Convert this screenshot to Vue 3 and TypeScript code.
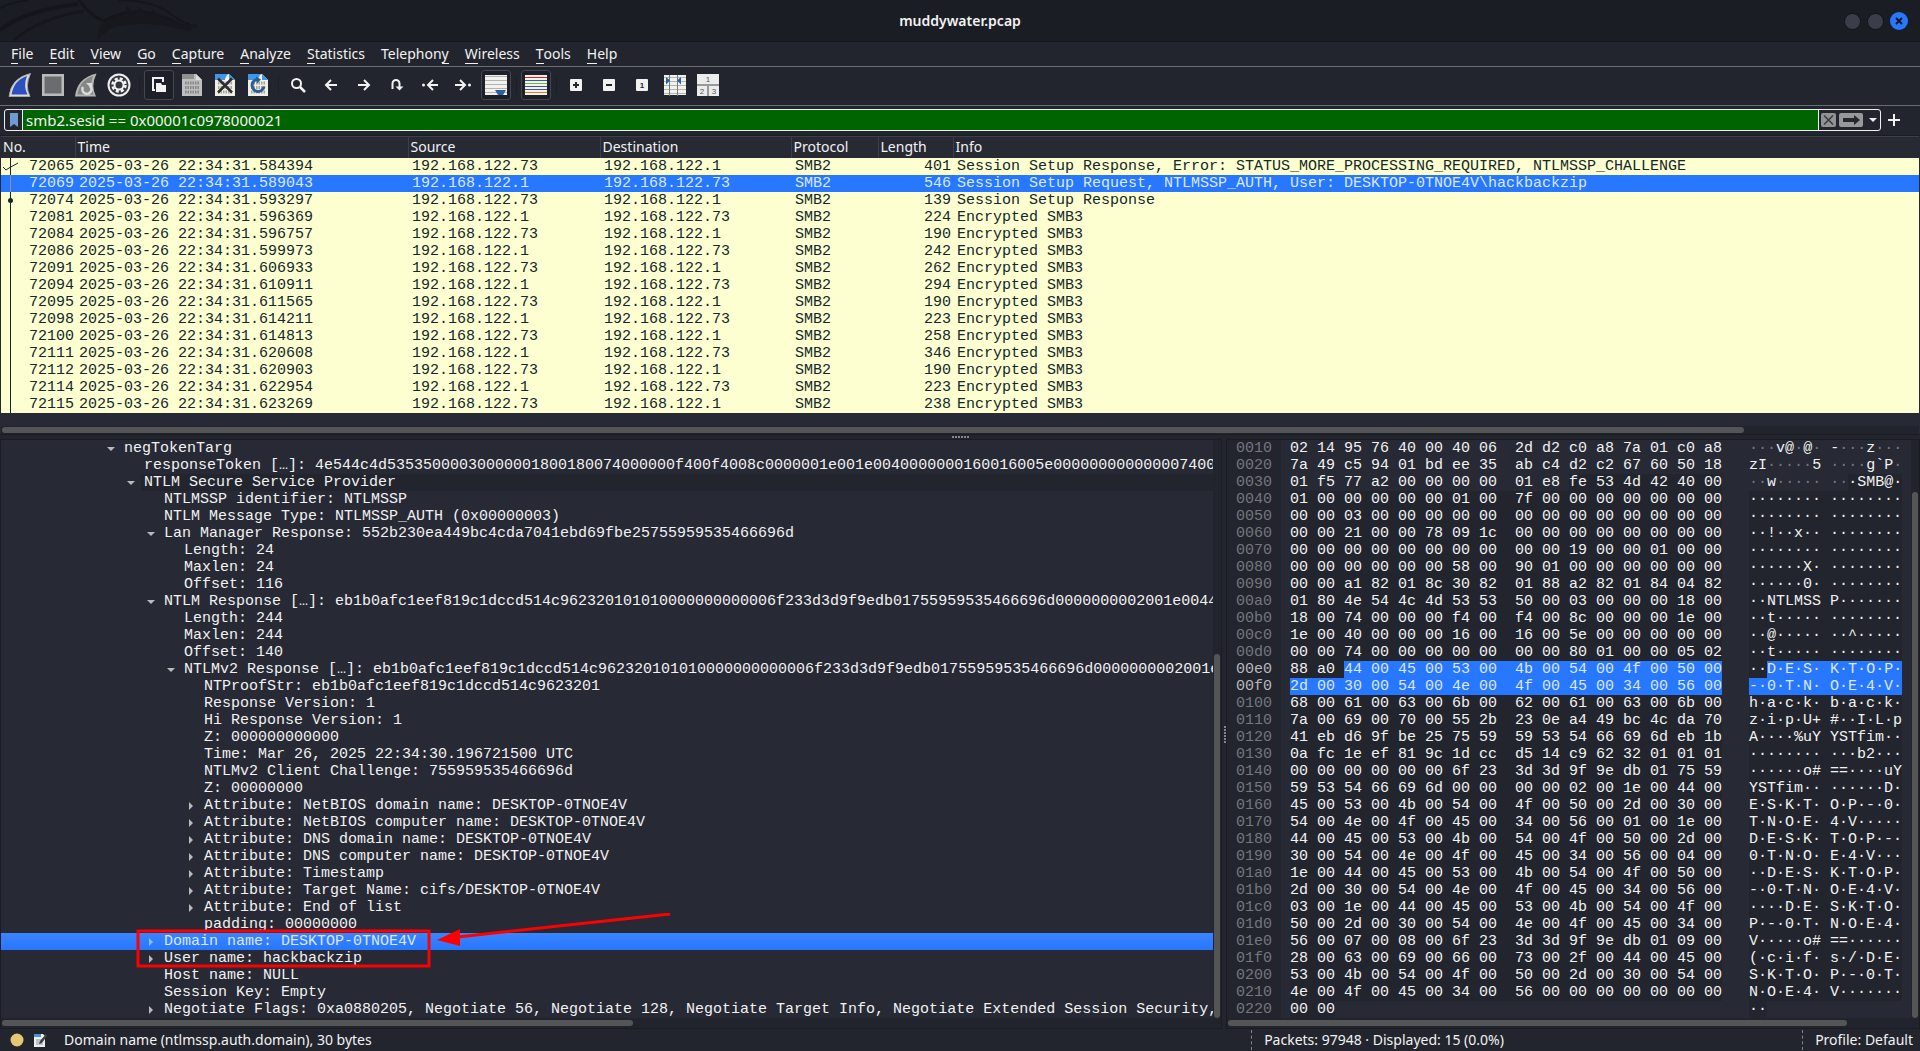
<script setup lang="ts">
interface Packet {
  no: number
  time: string
  src: string
  dst: string
  proto: string
  len: number
  info: string
}

interface TreeNode {
  depth: number
  text: string
  state?: 'open' | 'closed'
  kind?: 'header' | 'selected'
}

interface Run {
  text: string
  kind: string
}

interface MenuEntry {
  before: string
  key: string
  after: string
}

const menus: MenuEntry[] = [
  { before: '', key: 'F', after: 'ile' },
  { before: '', key: 'E', after: 'dit' },
  { before: '', key: 'V', after: 'iew' },
  { before: '', key: 'G', after: 'o' },
  { before: '', key: 'C', after: 'apture' },
  { before: '', key: 'A', after: 'nalyze' },
  { before: '', key: 'S', after: 'tatistics' },
  { before: 'Telephon', key: 'y', after: '' },
  { before: '', key: 'W', after: 'ireless' },
  { before: '', key: 'T', after: 'ools' },
  { before: '', key: 'H', after: 'elp' },
]

const client = '192.168.122.1'
const server = '192.168.122.73'

function packet(no: number, sec: string, fromServer: boolean, len: number, info = 'Encrypted SMB3'): Packet {
  return {
    no,
    time: '2025-03-26 22:34:31.' + sec,
    src: fromServer ? server : client,
    dst: fromServer ? client : server,
    proto: 'SMB2',
    len,
    info,
  }
}

const packets: Packet[] = [
  packet(72065, '584394', true, 401, 'Session Setup Response, Error: STATUS_MORE_PROCESSING_REQUIRED, NTLMSSP_CHALLENGE'),
  packet(72069, '589043', false, 546, 'Session Setup Request, NTLMSSP_AUTH, User: DESKTOP-0TNOE4V\\hackbackzip'),
  packet(72074, '593297', true, 139, 'Session Setup Response'),
  packet(72081, '596369', false, 224),
  packet(72084, '596757', true, 190),
  packet(72086, '599973', false, 242),
  packet(72091, '606933', true, 262),
  packet(72094, '610911', false, 294),
  packet(72095, '611565', true, 190),
  packet(72098, '614211', false, 223),
  packet(72100, '614813', true, 258),
  packet(72111, '620608', false, 346),
  packet(72112, '620903', true, 190),
  packet(72114, '622954', false, 223),
  packet(72115, '623269', true, 238),
]
const selectedNo = 72069

const ntResponse = 'eb1b0afc1eef819c1dccd514c962320101010000000000006f233d3d9f9edb01755959535466696d0000000002001e004400'

const tree: TreeNode[] = [
  { depth: 0, text: 'negTokenTarg', state: 'open' },
  { depth: 1, text: 'responseToken […]: 4e544c4d53535000030000001800180074000000f400f4008c0000001e001e0040000000160016005e00000000000000740000' },
  { depth: 1, text: 'NTLM Secure Service Provider', state: 'open', kind: 'header' },
  { depth: 2, text: 'NTLMSSP identifier: NTLMSSP' },
  { depth: 2, text: 'NTLM Message Type: NTLMSSP_AUTH (0x00000003)' },
  { depth: 2, text: 'Lan Manager Response: 552b230ea449bc4cda7041ebd69fbe25755959535466696d', state: 'open' },
  { depth: 3, text: 'Length: 24' },
  { depth: 3, text: 'Maxlen: 24' },
  { depth: 3, text: 'Offset: 116' },
  { depth: 2, text: 'NTLM Response […]: ' + ntResponse, state: 'open' },
  { depth: 3, text: 'Length: 244' },
  { depth: 3, text: 'Maxlen: 244' },
  { depth: 3, text: 'Offset: 140' },
  { depth: 3, text: 'NTLMv2 Response […]: ' + ntResponse, state: 'open' },
  { depth: 4, text: 'NTProofStr: eb1b0afc1eef819c1dccd514c9623201' },
  { depth: 4, text: 'Response Version: 1' },
  { depth: 4, text: 'Hi Response Version: 1' },
  { depth: 4, text: 'Z: 000000000000' },
  { depth: 4, text: 'Time: Mar 26, 2025 22:34:30.196721500 UTC' },
  { depth: 4, text: 'NTLMv2 Client Challenge: 755959535466696d' },
  { depth: 4, text: 'Z: 00000000' },
  { depth: 4, text: 'Attribute: NetBIOS domain name: DESKTOP-0TNOE4V', state: 'closed' },
  { depth: 4, text: 'Attribute: NetBIOS computer name: DESKTOP-0TNOE4V', state: 'closed' },
  { depth: 4, text: 'Attribute: DNS domain name: DESKTOP-0TNOE4V', state: 'closed' },
  { depth: 4, text: 'Attribute: DNS computer name: DESKTOP-0TNOE4V', state: 'closed' },
  { depth: 4, text: 'Attribute: Timestamp', state: 'closed' },
  { depth: 4, text: 'Attribute: Target Name: cifs/DESKTOP-0TNOE4V', state: 'closed' },
  { depth: 4, text: 'Attribute: End of list', state: 'closed' },
  { depth: 4, text: 'padding: 00000000' },
  { depth: 2, text: 'Domain name: DESKTOP-0TNOE4V', state: 'closed', kind: 'selected' },
  { depth: 2, text: 'User name: hackbackzip', state: 'closed' },
  { depth: 2, text: 'Host name: NULL' },
  { depth: 2, text: 'Session Key: Empty' },
  { depth: 2, text: 'Negotiate Flags: 0xa0880205, Negotiate 56, Negotiate 128, Negotiate Target Info, Negotiate Extended Session Security,', state: 'closed' },
]

const firstOffset = 0x10
const dump: string[] = [
  '02 14 95 76 40 00 40 06 2d d2 c0 a8 7a 01 c0 a8',
  '7a 49 c5 94 01 bd ee 35 ab c4 d2 c2 67 60 50 18',
  '01 f5 77 a2 00 00 00 00 01 e8 fe 53 4d 42 40 00',
  '01 00 00 00 00 00 01 00 7f 00 00 00 00 00 00 00',
  '00 00 03 00 00 00 00 00 00 00 00 00 00 00 00 00',
  '00 00 21 00 00 78 09 1c 00 00 00 00 00 00 00 00',
  '00 00 00 00 00 00 00 00 00 00 19 00 00 01 00 00',
  '00 00 00 00 00 00 58 00 90 01 00 00 00 00 00 00',
  '00 00 a1 82 01 8c 30 82 01 88 a2 82 01 84 04 82',
  '01 80 4e 54 4c 4d 53 53 50 00 03 00 00 00 18 00',
  '18 00 74 00 00 00 f4 00 f4 00 8c 00 00 00 1e 00',
  '1e 00 40 00 00 00 16 00 16 00 5e 00 00 00 00 00',
  '00 00 74 00 00 00 00 00 00 00 80 01 00 00 05 02',
  '88 a0 44 00 45 00 53 00 4b 00 54 00 4f 00 50 00',
  '2d 00 30 00 54 00 4e 00 4f 00 45 00 34 00 56 00',
  '68 00 61 00 63 00 6b 00 62 00 61 00 63 00 6b 00',
  '7a 00 69 00 70 00 55 2b 23 0e a4 49 bc 4c da 70',
  '41 eb d6 9f be 25 75 59 59 53 54 66 69 6d eb 1b',
  '0a fc 1e ef 81 9c 1d cc d5 14 c9 62 32 01 01 01',
  '00 00 00 00 00 00 6f 23 3d 3d 9f 9e db 01 75 59',
  '59 53 54 66 69 6d 00 00 00 00 02 00 1e 00 44 00',
  '45 00 53 00 4b 00 54 00 4f 00 50 00 2d 00 30 00',
  '54 00 4e 00 4f 00 45 00 34 00 56 00 01 00 1e 00',
  '44 00 45 00 53 00 4b 00 54 00 4f 00 50 00 2d 00',
  '30 00 54 00 4e 00 4f 00 45 00 34 00 56 00 04 00',
  '1e 00 44 00 45 00 53 00 4b 00 54 00 4f 00 50 00',
  '2d 00 30 00 54 00 4e 00 4f 00 45 00 34 00 56 00',
  '03 00 1e 00 44 00 45 00 53 00 4b 00 54 00 4f 00',
  '50 00 2d 00 30 00 54 00 4e 00 4f 00 45 00 34 00',
  '56 00 07 00 08 00 6f 23 3d 3d 9f 9e db 01 09 00',
  '28 00 63 00 69 00 66 00 73 00 2f 00 44 00 45 00',
  '53 00 4b 00 54 00 4f 00 50 00 2d 00 30 00 54 00',
  '4e 00 4f 00 45 00 34 00 56 00 00 00 00 00 00 00',
  '00 00',
]

// Byte ranges of the SMB2 layer and of the chosen field.
const layerStart = 0x3a
const fieldStart = 0xe2
const fieldEnd = 0x100

function kindOf(pos: number): string {
  if (pos >= fieldStart && pos < fieldEnd) return 'picked'
  return pos >= layerStart ? 'layer' : 'plain'
}

function push(runs: Run[], text: string, kind: string): void {
  const last = runs[runs.length - 1]
  if (last && last.kind === kind) last.text += text
  else runs.push({ text, kind })
}

// A separator always belongs to the run of the byte before it.
function append(runs: Run[], sep: string, text: string, kind: string): void {
  const last = runs[runs.length - 1]
  if (last) last.text += sep
  push(runs, text, kind)
}

const hexRows = dump.map((line, row) => {
  const base = firstOffset + row * 16
  const hex: Run[] = []
  const ascii: Run[] = []
  line.split(' ').forEach((byte, i) => {
    const kind = kindOf(base + i)
    const code = parseInt(byte, 16)
    const printable = code >= 0x20 && code < 0x7f
    append(hex, i === 8 ? '  ' : ' ', byte, kind)
    append(ascii, i === 8 ? ' ' : '', printable ? String.fromCharCode(code) : '·', kind === 'plain' && !printable ? 'faint' : kind)
  })
  return {
    offset: base.toString(16).padStart(4, '0'),
    active: base + 16 > fieldStart && base < fieldEnd,
    hex,
    ascii,
  }
})
</script>

<template>
  <div class="window">
    <header class="titlebar">
      <svg class="dragon" width="200" height="42" viewBox="0 0 200 42" aria-hidden="true">
        <g fill="none" stroke="#14161b">
          <path d="M0 8Q12 2 28 0" stroke-width="2" />
          <path d="M0 30Q26 10 78 4" stroke-width="4" />
          <path d="M14 40Q40 18 84 11" stroke-width="3" opacity=".7" />
          <path d="M79 0Q90 16 104 21Q128 8 154 14L172 20L182 26L197 26" stroke-width="3" />
          <path d="M118 0Q150 0 168 12Q180 22 190 24" stroke-width="2" />
        </g>
        <path d="M104 22Q126 12 150 15L172 22L196 26L190 31L160 25Q130 22 112 28Q104 33 98 40Q96 28 104 22ZM126 5l8 8h6l-2-6 10 7h5l-1-5 8 6-12 3-20-2z" fill="#16181e" />
      </svg>
      <h1 class="title">muddywater.pcap</h1>
      <div class="controls">
        <button class="dot" type="button" aria-label="Minimize"></button>
        <button class="dot" type="button" aria-label="Maximize"></button>
        <button class="close" type="button" aria-label="Close">
          <svg width="18" height="18" viewBox="0 0 18 18"><path d="M6 6l6 6M12 6l-6 6" stroke="#14181f" stroke-width="2" /></svg>
        </button>
      </div>
    </header>

    <nav class="menubar">
      <button v-for="m in menus" :key="m.before + m.key + m.after" type="button" class="menu">{{ m.before }}<span class="key">{{ m.key }}</span>{{ m.after }}</button>
    </nav>

    <div class="toolbar" role="toolbar" aria-label="Main">
      <button type="button" aria-label="Start capture">
        <svg width="24" height="24" viewBox="0 0 24 24"><path d="M1 23.500Q3 5 22.500 .5Q16.500 13 22 23.500Z" fill="#dcdcdc" stroke="#a4a4a4" /><path d="M3.500 21.500Q6 7 19 3Q15 13 19.500 21.500Z" fill="#2c50c0" /></svg>
      </button>
      <button type="button" aria-label="Stop capture">
        <svg width="24" height="24" viewBox="0 0 24 24"><path d="M1 1h22v22H1z" fill="#b9bbbb" /><path d="M3.500 3.500h17v17h-17z" fill="#6a6d70" /></svg>
      </button>
      <button type="button" aria-label="Restart capture">
        <svg width="24" height="24" viewBox="0 0 24 24"><path d="M1 23.500Q3 5 22.500 .5Q16.500 13 22 23.500Z" fill="#b4b4b4" /><path d="M3.500 21.500Q6 7 19 3Q15 13 19.500 21.500Z" fill="#858687" /><path d="M9 14a4.500 4.500 0 1 0 7-1" fill="none" stroke="#ddd" stroke-width="2.500" /><path d="M12 10h6v6z" fill="#ddd" /></svg>
      </button>
      <button type="button" aria-label="Capture options">
        <svg width="24" height="24" viewBox="0 0 24 24"><circle cx="12" cy="12" r="10.500" fill="#35373b" stroke="#eee" stroke-width="2" /><circle cx="12" cy="12" r="6.500" fill="none" stroke="#f4f4f4" stroke-width="2.500" stroke-dasharray="3 2.100" /><circle cx="12" cy="12" r="4.500" fill="none" stroke="#f4f4f4" stroke-width="2" /></svg>
      </button>
      <span class="sep"></span>
      <button type="button" class="on" aria-label="Open file">
        <svg width="24" height="24" viewBox="0 0 24 24"><path d="M8 17H6V5h10v4" fill="none" stroke="#f2f2f2" stroke-width="2" /><path d="M9 10h5l1 2h4v7H9z" fill="#f2f2f2" /></svg>
      </button>
      <button type="button" aria-label="Save file">
        <svg width="24" height="24" viewBox="0 0 24 24"><path d="M2 1h14l6 6v16H2z" fill="#bebebe" /><path d="M2 1h12v5H2z" fill="#8f9090" /><path d="M16 1v6h6z" fill="#dedede" /><path d="M5 10h14M5 14.500h14M5 19h14" stroke="#858585" stroke-width="3" stroke-dasharray="1.500 1" /></svg>
      </button>
      <button type="button" aria-label="Close file">
        <svg width="24" height="24" viewBox="0 0 24 24"><path d="M2 1h14l6 6v16H2z" fill="#f0efe2" /><path d="M2 1h14l6 6H2z" fill="#3f97e8" /><path d="M12 6l2-4 2-1v6h6v1H12z" fill="#f6f6f2" /><path d="M5 10h14M5 14.500h14M5 19h14" stroke="#a3a49c" stroke-width="3" stroke-dasharray="1.500 1" /><path d="M5 5.500l14 14M19 5.500l-14 14" stroke="#2b2d31" stroke-width="2.500" /></svg>
      </button>
      <button type="button" aria-label="Reload file">
        <svg width="24" height="24" viewBox="0 0 24 24"><path d="M2 1h14l6 6v16H2z" fill="#f0efe2" /><path d="M2 1h14l6 6H2z" fill="#3f97e8" /><path d="M12 6l2-4 2-1v6h6v1H12z" fill="#f6f6f2" /><path d="M5 10h14M5 14.500h14M5 19h14" stroke="#a3a49c" stroke-width="3" stroke-dasharray="1.500 1" /><path d="M11 6.500a6 6 0 1 0 7 7" fill="none" stroke="#2a5d9d" stroke-width="3" /><path d="M10 3.500l5 3-4 4z" fill="#2a5d9d" /></svg>
      </button>
      <span class="sep"></span>
      <button type="button" aria-label="Find packet">
        <svg width="24" height="24" viewBox="0 0 24 24"><circle cx="10.500" cy="10.500" r="4.500" fill="none" stroke="#f2f2f2" stroke-width="2" /><path d="M14 14l5 5" stroke="#f2f2f2" stroke-width="2.500" /></svg>
      </button>
      <button type="button" aria-label="Previous packet">
        <svg width="24" height="24" viewBox="0 0 24 24" fill="none" stroke="#f2f2f2" stroke-width="2"><path d="M18 12H7M12 7l-5 5 5 5" /></svg>
      </button>
      <button type="button" aria-label="Next packet">
        <svg width="24" height="24" viewBox="0 0 24 24" fill="none" stroke="#f2f2f2" stroke-width="2"><path d="M6 12h11M12 7l5 5-5 5" /></svg>
      </button>
      <button type="button" aria-label="Go to packet">
        <svg width="24" height="24" viewBox="0 0 24 24"><path d="M7.500 16v-5.500a3.500 3.500 0 0 1 7 0V16" fill="none" stroke="#f2f2f2" stroke-width="2" /><path d="M10.500 13.500h8l-4 4z" fill="#f2f2f2" /></svg>
      </button>
      <button type="button" aria-label="First packet">
        <svg width="24" height="24" viewBox="0 0 24 24" fill="none" stroke="#f2f2f2" stroke-width="2"><path d="M20 12H10M15 7l-5 5 5 5" /><circle cx="5.500" cy="12" r="1.500" fill="#f2f2f2" stroke="none" /></svg>
      </button>
      <button type="button" aria-label="Last packet">
        <svg width="24" height="24" viewBox="0 0 24 24" fill="none" stroke="#f2f2f2" stroke-width="2"><path d="M4 12h10M9 7l5 5-5 5" /><circle cx="18.500" cy="12" r="1.500" fill="#f2f2f2" stroke="none" /></svg>
      </button>
      <button type="button" class="on" aria-label="Auto scroll">
        <svg width="24" height="24" viewBox="0 0 24 24"><path d="M1 2h22v20H1z" fill="#f1f1ee" /><path d="M1 3.500h22M1 7.500h22M1 11.500h22M1 15.500h22M1 19.500h22" stroke="#b3b3b0" /><path d="M11 17h11l-3 5h-5z" fill="#2c5fa8" /></svg>
      </button>
      <span class="sep"></span>
      <button type="button" class="on" aria-label="Colorize packets">
        <svg width="24" height="24" viewBox="0 0 24 24"><path d="M1 2h22v20H1z" fill="#f1f1ee" /><path d="M1 4.500h22" stroke="#ec1c1c" /><path d="M1 7.500h22M1 13.500h22" stroke="#2c5fa8" /><path d="M1 10.500h22" stroke="#6cc021" /><path d="M1 16.500h22" stroke="#64507c" /><path d="M1 19.500h22" stroke="#cd7f38" /></svg>
      </button>
      <span class="sep"></span>
      <button type="button" aria-label="Zoom in">
        <svg width="24" height="24" viewBox="0 0 24 24"><rect x="6" y="6" width="12" height="12" rx="1" fill="#f2f2f2" /><path d="M9 12h6M12 9v6" stroke="#23252e" stroke-width="2" /></svg>
      </button>
      <button type="button" aria-label="Zoom out">
        <svg width="24" height="24" viewBox="0 0 24 24"><rect x="6" y="6" width="12" height="12" rx="1" fill="#f2f2f2" /><path d="M9 12h6" stroke="#23252e" stroke-width="2" /></svg>
      </button>
      <button type="button" aria-label="Normal size">
        <svg width="24" height="24" viewBox="0 0 24 24"><rect x="6" y="6" width="12" height="12" rx="1" fill="#f2f2f2" /><text x="12" y="15" class="bold-digit">1</text></svg>
      </button>
      <button type="button" aria-label="Resize columns">
        <svg width="24" height="24" viewBox="0 0 24 24"><path d="M1 2h22v20H1z" fill="#f1f1ee" /><path d="M1 4.500h22M1 8.500h22M1 12.500h22M1 16.500h22M1 20.500h22" stroke="#b3b3b0" /><path d="M6.500 2v21M14.500 2v21" stroke="#77787a" /><path d="M3 4l4 3.500-4 4zM18 4l-4 3.500 4 4z" fill="#2c5fa8" /></svg>
      </button>
      <button type="button" aria-label="Layout">
        <svg width="24" height="24" viewBox="0 0 24 24"><path d="M1 1h22v22H1z" fill="#ececec" /><path d="M1 12h22M12 12v11" stroke="#98999b" stroke-width="2" /><text x="12" y="9" class="digit">1</text><text x="6" y="21" class="digit">2</text><text x="18" y="21" class="digit">3</text></svg>
      </button>
    </div>

    <form class="filterbar" @submit.prevent>
      <div class="filterbox">
        <button type="button" class="bookmark" aria-label="Saved filters">
          <svg width="16" height="18" viewBox="0 0 16 18"><path d="M4 2h8v14l-4-3-4 3z" fill="#6f9bd2" /></svg>
        </button>
        <input class="filter" type="text" aria-label="Display filter" value="smb2.sesid == 0x00001c0978000021" spellcheck="false" />
        <div class="actions">
          <button type="button" aria-label="Clear filter">
            <svg width="15" height="14" viewBox="0 0 15 14"><rect width="15" height="14" rx="2" fill="#919293" /><path d="M3 2.500l9 9M12 2.500l-9 9" stroke="#3a3b3f" stroke-width="1.500" /></svg>
          </button>
          <button type="submit" aria-label="Apply filter">
            <svg width="24" height="14" viewBox="0 0 24 14"><rect width="24" height="14" rx="2" fill="#97989a" /><path d="M4 5h11V2l6 5-6 5V9H4z" fill="#25272e" /></svg>
          </button>
          <button type="button" class="caret" aria-label="Filter history">
            <svg width="8" height="4" viewBox="0 0 8 4"><path d="M0 0h8l-4 4z" fill="#eee" /></svg>
          </button>
        </div>
      </div>
      <button type="button" class="add" aria-label="Add filter button">
        <svg width="12" height="12" viewBox="0 0 12 12"><path d="M6 0v12M0 6h12" stroke="#f0f0f0" stroke-width="2" /></svg>
      </button>
    </form>

    <section class="list">
      <table class="packets">
        <colgroup>
          <col class="c-no" />
          <col class="c-time" />
          <col class="c-src" />
          <col class="c-dst" />
          <col class="c-proto" />
          <col class="c-len" />
          <col />
        </colgroup>
        <thead>
          <tr>
            <th>No.</th>
            <th>Time</th>
            <th>Source</th>
            <th>Destination</th>
            <th>Protocol</th>
            <th>Length</th>
            <th>Info</th>
          </tr>
        </thead>
        <tbody>
          <tr v-for="(p, i) in packets" :key="p.no" :class="{ selected: p.no === selectedNo }">
            <td class="num first">
              <div class="mark">
                <svg width="18" height="17" viewBox="0 0 18 17" aria-hidden="true">
                  <path d="M9.500 0v17" :stroke="p.no === selectedNo ? '#8b8f9e' : '#12272e'" />
                  <path v-if="i === 0" d="M2 9l3 3 3-2 9-5" fill="none" stroke="#12272e" />
                  <circle v-if="i === 2" cx="9.500" cy="8.500" r="2.500" fill="#12272e" />
                </svg>
                <span>{{ p.no }}</span>
              </div>
            </td>
            <td>{{ p.time }}</td>
            <td>{{ p.src }}</td>
            <td>{{ p.dst }}</td>
            <td>{{ p.proto }}</td>
            <td class="num">{{ p.len }}</td>
            <td>{{ p.info }}</td>
          </tr>
        </tbody>
      </table>
      <div class="hbar wide"><div class="thumb"></div></div>
    </section>

    <div class="splitter"><span class="grip"></span></div>

    <main class="panes">
      <section class="pane details">
        <div class="view">
          <ul class="tree">
            <li v-for="(n, i) in tree" :key="i" :class="['node', 'd' + n.depth, n.kind]">
              <button v-if="n.state" type="button" class="toggle" :aria-label="n.state === 'open' ? 'Collapse' : 'Expand'">
                <svg width="8" height="8" viewBox="0 0 8 8"><path :d="n.state === 'open' ? 'M0 2h8l-4 4z' : 'M2 0v8l4-4z'" fill="currentColor" /></svg>
              </button>
              <span v-else class="toggle"></span>
              <span class="label">{{ n.text }}</span>
            </li>
          </ul>
          <svg class="note" width="540" height="60" viewBox="0 0 540 60" aria-hidden="true">
            <rect x="2" y="18" width="291" height="35" fill="none" stroke="#fe0000" stroke-width="3" />
            <path d="M322 24L534 1" stroke="#fe0000" stroke-width="3" />
            <path d="M301 27L324 16V33Z" fill="#fe0000" />
          </svg>
          <div class="vbar"><div class="thumb"></div></div>
        </div>
        <div class="hbar"><div class="thumb"></div></div>
      </section>

      <div class="vsplitter"><span class="vgrip"></span></div>

      <section class="pane bytes">
        <div class="view">
          <div class="offsets">
            <div v-for="r in hexRows" :key="r.offset" :class="{ active: r.active }">{{ r.offset }}</div>
          </div>
          <div class="hex">
            <div v-for="r in hexRows" :key="r.offset"><span v-for="(s, i) in r.hex" :key="i" :class="s.kind">{{ s.text }}</span></div>
          </div>
          <div class="ascii">
            <div v-for="r in hexRows" :key="r.offset"><span v-for="(s, i) in r.ascii" :key="i" :class="s.kind">{{ s.text }}</span></div>
          </div>
          <div class="vbar"><div class="thumb"></div></div>
        </div>
        <div class="hbar"><div class="thumb"></div></div>
      </section>
    </main>

    <footer class="status">
      <button type="button" aria-label="Expert information">
        <svg width="14" height="14" viewBox="0 0 14 14"><circle cx="7" cy="7" r="6.500" fill="#e5c876" /></svg>
      </button>
      <button type="button" aria-label="Capture comment">
        <svg width="14" height="14" viewBox="0 0 14 14"><path d="M1 1h9l2 2v11H1z" fill="#eef0f0" /><path d="M1 1h7v3H1z" fill="#4c93d6" /><path d="M3 7h6M3 9h6M3 11h7" stroke="#8d9499" /><path d="M13 1L7 8l-1 3 3-1 5-7z" fill="#3c4147" /></svg>
      </button>
      <span class="field">Domain name (ntlmssp.auth.domain), 30 bytes</span>
      <span class="count">Packets: 97948 · Displayed: 15 (0.0%)</span>
      <span class="profile">Profile: Default</span>
    </footer>
  </div>
</template>

<style>
body {
  margin: 0;
  background: #23252e;
}
</style>

<style scoped>
.window {
  display: flex;
  flex-direction: column;
  min-height: 100vh;
  background: #23252e;
  color: #f2f2f2;
  font: 14px/20px "Noto Sans", sans-serif;
}

button {
  display: flex;
  align-items: center;
  justify-content: center;
  padding: 0;
  border: 0;
  background: none;
  color: inherit;
  font: inherit;
}

.titlebar {
  display: grid;
  grid-template-columns: 1fr auto 1fr;
  align-items: center;
  height: 42px;
  border-bottom: 1px solid #15171c;
  background: #1b1d24;
  box-sizing: border-box;
}

.title {
  margin: 0;
  font-size: 14px;
  font-weight: 600;
}

.controls {
  display: flex;
  align-items: center;
  justify-content: flex-end;
  gap: 6px;
  padding-right: 12px;
}

.dot {
  width: 17px;
  height: 17px;
  border: 1px solid #111318;
  border-radius: 50%;
  background: #3b3d4a;
}

.close {
  width: 18px;
  height: 18px;
  border-radius: 50%;
  background: #2777ff;
}

.menubar {
  display: flex;
  gap: 16px;
  height: 24px;
  padding-left: 11px;
  border-bottom: 1px solid #6a6c72;
}

.menu {
  height: 24px;
  line-height: 18px;
}

.key {
  border-bottom: 1px solid #f2f2f2;
}

.toolbar {
  display: flex;
  align-items: center;
  gap: 3px;
  height: 36px;
  padding: 0 0 2px 5px;
  border-bottom: 1px solid #6a6c72;
}

.toolbar button {
  width: 30px;
  height: 30px;
  border-radius: 3px;
  box-sizing: border-box;
}

.toolbar .on {
  border: 1px solid #454652;
  background: #1e2029;
}

.digit,
.bold-digit {
  fill: #55575a;
  font: 8px "Liberation Sans", sans-serif;
  text-anchor: middle;
}

.bold-digit {
  fill: #23252e;
  font-weight: 700;
}

.sep {
  width: 4px;
  height: 18px;
  background: linear-gradient(#1d1f27, #1d1f27) center / 1px 100% no-repeat;
}

.filterbar {
  display: flex;
  align-items: center;
  padding: 3px 13px 4px 4px;
}

.filterbox {
  display: flex;
  flex: 1;
  height: 22px;
  border: 1px solid #f0f0f0;
  border-radius: 3px;
  box-sizing: border-box;
}

.bookmark {
  width: 17px;
}

.filter {
  flex: 1;
  min-width: 0;
  padding: 0 3px;
  border: 0;
  border-left: 1px solid #f0f0f0;
  border-right: 1px solid #f0f0f0;
  background: #006400;
  color: #f4f4f4;
  font: inherit;
  font-size: 15px;
}

.actions {
  display: flex;
  align-items: center;
  gap: 3px;
  padding-left: 2px;
}

.caret {
  width: 14px;
}

.add {
  width: 26px;
}

.list {
  padding: 0 1px;
  border-top: 1px solid #1a1c22;
  border-bottom: 1px solid #1a1c22;
  background: #272935;
}

.packets {
  width: 100%;
  table-layout: fixed;
  border-collapse: collapse;
}

.c-no {
  width: 74px;
}

.c-time {
  width: 333px;
}

.c-src {
  width: 192px;
}

.c-dst {
  width: 191px;
}

.c-proto {
  width: 87px;
}

.c-len {
  width: 75px;
}

th {
  height: 20px;
  padding: 0 0 1px 2px;
  border-top: 1px solid #3c3e48;
  border-left: 1px solid #3c3e48;
  background: #272a33;
  font-weight: 400;
  line-height: 20px;
  text-align: left;
}

th:first-child {
  border-left: 0;
}

td {
  height: 17px;
  overflow: hidden;
  padding: 0 2px 0 4px;
  background: #feffd0;
  color: #12272e;
  font: 15px/17px "Liberation Mono", monospace;
  white-space: pre;
}

.selected td {
  background: #2777ff;
  color: #dce8ff;
}

.num {
  text-align: right;
}

.first {
  padding: 0 1px 0 0;
}

.mark {
  display: flex;
  justify-content: space-between;
}

.hbar {
  display: flex;
  align-items: center;
  height: 10px;
  background: #22242d;
}

.hbar.wide {
  height: 8px;
  margin-top: 13px;
}

.hbar .thumb {
  height: 6px;
  margin-left: 1px;
  border-radius: 3px;
  background: #545557;
}

.wide .thumb {
  width: 90.8%;
}

.details .hbar .thumb {
  width: 51.7%;
}

.bytes .hbar .thumb {
  width: 89.5%;
}

.splitter {
  display: flex;
  align-items: center;
  justify-content: center;
  height: 4px;
}

.grip {
  width: 17px;
  height: 2px;
  background: repeating-linear-gradient(90deg, #85868b 0 2px, transparent 2px 3px);
}

.panes {
  display: flex;
  flex: 1;
}

.pane {
  display: flex;
  flex-direction: column;
  border: 1px solid #1a1c22;
  background: #272935;
}

.details {
  flex: 1;
  min-width: 0;
}

.bytes {
  width: 692px;
}

.view {
  display: flex;
  flex: 1;
  position: relative;
  font: 15px/17px "Liberation Mono", monospace;
  white-space: pre;
}

.tree {
  flex: 1;
  min-width: 0;
  margin: 0;
  padding: 0;
  overflow: hidden;
  list-style: none;
}

.node {
  display: flex;
  height: 17px;
}

.d0 {
  padding-left: 106px;
}

.d1 {
  padding-left: 126px;
}

.d2 {
  padding-left: 146px;
}

.d3 {
  padding-left: 166px;
}

.d4 {
  padding-left: 186px;
}

.toggle {
  flex: none;
  width: 8px;
  margin-right: 6px;
  color: #b9bbbb;
}

.label {
  flex: 1;
  min-width: 0;
  padding-left: 3px;
}

.header .label {
  background: #22252e;
}

.node.selected {
  background: linear-gradient(#3a84ff, #2777ff);
  color: #dce8ff;
}

.selected .toggle {
  color: #7fc4ff;
}

.note {
  position: absolute;
  left: 135px;
  top: 473px;
}

.vbar {
  display: flex;
  flex-direction: column;
  justify-content: flex-end;
  width: 8px;
  background: #22242d;
}

.vbar .thumb {
  width: 6px;
  margin-left: 1px;
  border-radius: 3px;
  background: #545557;
}

.details .vbar .thumb {
  height: 63%;
}

.bytes .vbar .thumb {
  height: 91%;
}

.vsplitter {
  display: flex;
  align-items: center;
  justify-content: flex-end;
  width: 4px;
}

.vgrip {
  width: 2px;
  height: 17px;
  background: repeating-linear-gradient(#85868b 0 2px, transparent 2px 3px);
}

.offsets {
  padding: 0 9px;
  background: #22252e;
  color: #75777d;
}

.offsets .active {
  color: #b9babd;
}

.hex {
  margin-left: 9px;
}

.ascii {
  flex: 1;
  margin-left: 27px;
}

.hex div,
.ascii div {
  display: flex;
  height: 17px;
}

.layer {
  background: #22252e;
}

.picked {
  background: #2777ff;
  color: #dce8ff;
}

.faint {
  color: #75777d;
}

.status {
  display: flex;
  align-items: center;
  height: 22px;
  padding: 0 7px 0 10px;
}

.status button {
  margin-right: 9px;
}

.field {
  flex: 1;
  margin-left: 8px;
}

.count {
  width: 538px;
}

.count,
.profile {
  padding-left: 12px;
  border-left: 1px dashed #85868b;
}
</style>
